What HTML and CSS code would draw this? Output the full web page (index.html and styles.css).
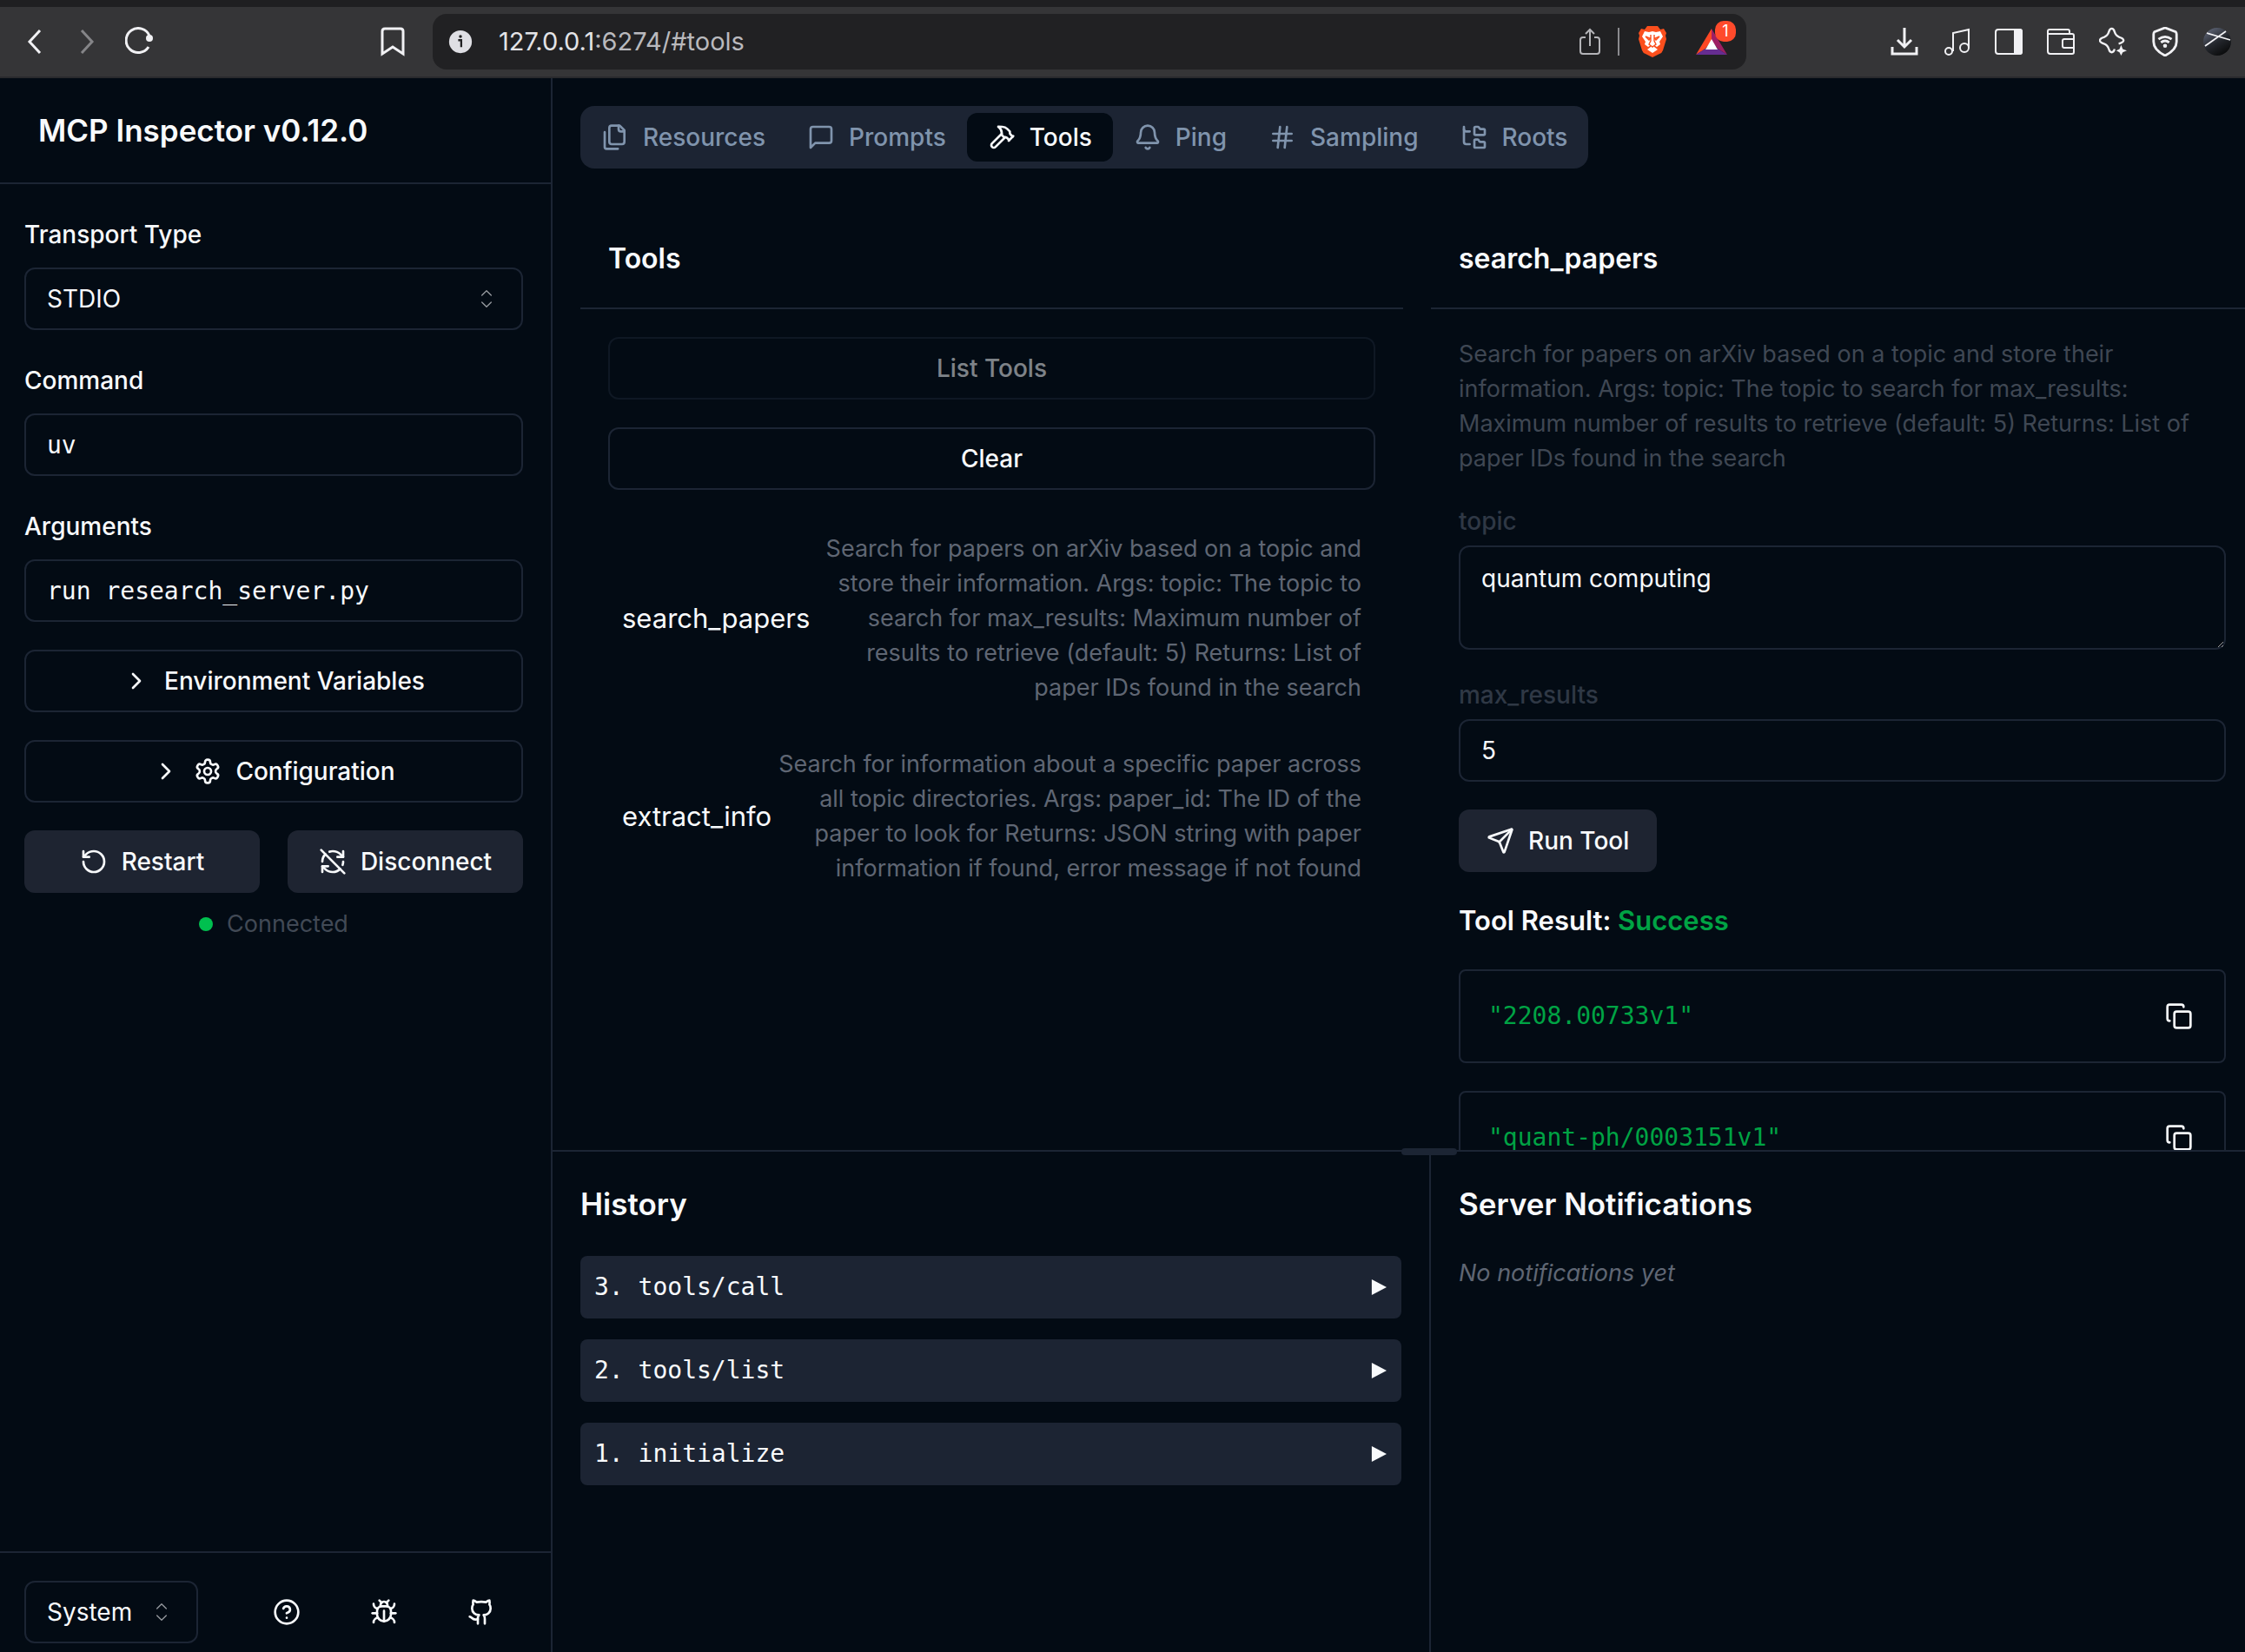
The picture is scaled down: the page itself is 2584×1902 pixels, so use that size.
FILE: index.html
```
<!DOCTYPE html>
<html lang="en">
<head>
<meta charset="UTF-8" />
<meta name="viewport" content="width=device-width, initial-scale=1" />
<title>MCP Inspector</title>
<link rel="stylesheet" href="styles.css">
</head>
<body>

<!-- Browser toolbar -->
<div class="browser-bar">
  <div class="browser-left">
    <div class="browser-nav">
      <button type="button" class="bar-btn" aria-label="Back"><svg viewBox="0 0 32 32"><path d="M22 3 10 16l12 13" stroke-width="3"/></svg></button>
      <button type="button" class="bar-btn dim" aria-label="Forward"><svg viewBox="0 0 32 32"><path d="m10 3 12 13-12 13" stroke-width="3"/></svg></button>
      <button type="button" class="bar-btn" aria-label="Reload"><svg viewBox="0 0 32 32"><path d="M27 22A14 14 0 1 1 28 9" stroke-width="3"/><circle cx="28" cy="12" r="4" fill="currentColor" stroke="none"/></svg></button>
    </div>
    <button type="button" class="bar-btn" aria-label="Bookmark"><svg viewBox="0 0 32 32"><path d="M7 1h18q3 0 3 3v26l-12-8-12 8V4q0-3 3-3Z" stroke-width="3"/></svg></button>
  </div>
  <div class="url-bar">
    <svg class="info" viewBox="0 0 32 32"><circle cx="16" cy="16" r="15" fill="#dfdfe4"/><circle cx="16" cy="9" r="2" fill="#212123"/><path d="M13 14h4v9" fill="none" stroke="#212123" stroke-width="2.6"/></svg>
    <p class="url">127.0.0.1<span>:6274/#tools</span></p>
    <button type="button" class="url-btn share" aria-label="Share"><svg viewBox="0 0 28 32"><path d="M9 11H6q-3 0-3 3v13q0 3 3 3h16q3 0 3-3V14q0-3-3-3h-3M14 21V2M9 7l5-5 5 5" stroke-width="2"/></svg></button>
    <span class="divider"></span>
    <button type="button" class="url-btn lion" aria-label="Brave Shields"><svg viewBox="0 0 32 36"><path d="M10 0h12l3 4 4-1 3 5-1 3 1 4-4 13q-1 3-4 4l-8 4-8-4q-3-1-4-4L0 15l1-4-1-3 3-5 4 1Z" fill="#fb4f1d" stroke="none"/><path d="m16 6 4 1 5-1 3 6-4 6 1 3-4 3-3-2v2l4 3-6 4-6-4 4-3v-2l-3 2-4-3 1-3-4-6 3-6 5 1Z" fill="#fff" stroke="none"/><path d="m8 12 5 2-1 2ZM24 12l-5 2 1 2ZM14 10v7l-2 4 4 3 4-3-2-4v-7" fill="none" stroke="#fb4f1d" stroke-width="1.4"/></svg></button>
    <button type="button" class="url-btn bat" aria-label="Brave Rewards"><svg viewBox="0 0 36 32"><path d="M18 1v14L11 24 0 31Z" fill="#ff4724" stroke="none"/><path d="M18 1v14l7 9 11 7Z" fill="#9e1f63" stroke="none"/><path d="m0 31 11-7h14l11 7Z" fill="#662d91" stroke="none"/><path d="M18 13l7 12H11Z" fill="#fff" stroke="none"/></svg><span class="badge">1</span></button>
  </div>
  <div class="browser-right">
    <button type="button" class="bar-btn" aria-label="Downloads"><svg viewBox="0 0 32 32"><path d="M16 0v20M8 14l8 8 8-8M2 22v8h28v-8" stroke-width="3"/></svg></button>
    <button type="button" class="bar-btn" aria-label="Media"><svg viewBox="0 0 32 32"><path d="M12 27V6l18-4v21"/><circle cx="7" cy="27" r="4"/><circle cx="25" cy="23" r="5"/></svg></button>
    <button type="button" class="bar-btn" aria-label="Sidebar"><svg viewBox="0 0 32 32"><rect x="1" y="2" width="30" height="28" rx="3"/><path d="M23 2h6q2 0 2 2v24q0 2-2 2h-6Z" fill="currentColor"/></svg></button>
    <button type="button" class="bar-btn" aria-label="Wallet"><svg viewBox="0 0 32 32"><path d="M26 7V4q0-2-2-2H3Q1 2 1 4v23q0 3 3 3h25q2 0 2-2V9q0-2-2-2H2M31 13H20q-2 0-2 2v6q0 2 2 2h11"/></svg></button>
    <button type="button" class="bar-btn" aria-label="Leo AI"><svg viewBox="0 0 34 34"><path d="M24 19.500Q30 18 30 15.500T25 11.500Q20.500 10 19 5 18 1 15.500 1T12 5Q10.500 10 6 11.500 1 13 1 15.500t5 4Q10.500 21 12 26q1 4 3.500 4t3.500-4" stroke-width="2.500"/><path d="m27 21 2 5 5 2-5 2-2 4-2-4-4-2 4-2Z" fill="currentColor" stroke="none"/></svg></button>
    <button type="button" class="bar-btn" aria-label="VPN"><svg viewBox="0 0 32 36"><path d="M16 1 29 6q1 1 1 3v9q0 10-14 17Q2 28 2 18V9q0-2 1-3Z" stroke-width="3"/><path d="M8 15q8-6 16 0M11 19q5-4 10 0" stroke-width="3"/><circle cx="16" cy="23" r="2.4" fill="currentColor" stroke="none"/></svg></button>
    <button type="button" class="bar-btn" aria-label="Profile"><svg viewBox="0 0 32 32"><defs><linearGradient id="ball" x1="0" y1="0" x2="0.6" y2="1"><stop offset="0" stop-color="#6a7185"/><stop offset=".6" stop-color="#24272d"/><stop offset="1" stop-color="#0c0d0e"/></linearGradient></defs><circle cx="16" cy="16" r="16" fill="url(#ball)" stroke="none"/><path d="M2 21 26 4M4 6l27 8" stroke-width="1.8"/></svg></button>
  </div>
</div>

<div class="app">
  <!-- Connection settings -->
  <aside class="sidebar">
    <header class="sidebar-header"><h1>MCP Inspector v0.12.0</h1></header>

    <form class="settings">
      <div class="field">
        <label for="transport">Transport Type</label>
        <div class="select">
          <select id="transport"><option>STDIO</option><option>SSE</option></select>
          <svg class="icon caret" viewBox="0 0 24 24"><path d="m8 9 4-4 4 4M8 15l4 4 4-4"/></svg>
        </div>
      </div>
      <div class="field">
        <label for="command">Command</label>
        <input type="text" id="command" class="mono" value="uv">
      </div>
      <div class="field">
        <label for="args">Arguments</label>
        <input type="text" id="args" class="mono" value="run research_server.py">
      </div>
      <button type="button" class="btn outline">
        <svg class="icon" viewBox="0 0 24 24"><path d="m9 18 6-6-6-6"/></svg>
        Environment Variables
      </button>
      <button type="button" class="btn outline">
        <svg class="icon" viewBox="0 0 24 24"><path d="m9 18 6-6-6-6"/></svg>
        <svg class="icon" viewBox="0 0 24 24"><path d="M12.22 2h-.44a2 2 0 0 0-2 2v.18a2 2 0 0 1-1 1.73l-.43.25a2 2 0 0 1-2 0l-.15-.08a2 2 0 0 0-2.73.73l-.22.38a2 2 0 0 0 .73 2.73l.15.1a2 2 0 0 1 1 1.72v.51a2 2 0 0 1-1 1.74l-.15.09a2 2 0 0 0-.73 2.73l.22.38a2 2 0 0 0 2.73.73l.15-.08a2 2 0 0 1 2 0l.43.25a2 2 0 0 1 1 1.73V20a2 2 0 0 0 2 2h.44a2 2 0 0 0 2-2v-.18a2 2 0 0 1 1-1.73l.43-.25a2 2 0 0 1 2 0l.15.08a2 2 0 0 0 2.73-.73l.22-.39a2 2 0 0 0-.73-2.73l-.15-.08a2 2 0 0 1-1-1.74v-.5a2 2 0 0 1 1-1.74l.15-.09a2 2 0 0 0 .73-2.73l-.22-.38a2 2 0 0 0-2.73-.73l-.15.08a2 2 0 0 1-2 0l-.43-.25a2 2 0 0 1-1-1.73V4a2 2 0 0 0-2-2z"/><circle cx="12" cy="12" r="3"/></svg>
        Configuration
      </button>
      <div>
        <div class="button-group">
          <button type="button" class="btn solid">
            <svg class="icon" viewBox="0 0 24 24"><path d="M3 12a9 9 0 1 0 9-9 9.75 9.75 0 0 0-6.74 2.74L3 8"/><path d="M3 3v5h5"/></svg>
            Restart
          </button>
          <button type="button" class="btn solid">
            <svg class="icon" viewBox="0 0 24 24"><path d="M21 8 18.74 5.74A9.75 9.75 0 0 0 12 3c-1 0-1.97.16-2.87.47"/><path d="M8 16H3v5"/><path d="M3 12c0-2.49 1-4.74 2.64-6.36"/><path d="m3 16 2.26 2.26A9.75 9.75 0 0 0 12 21c2.49 0 4.74-1 6.36-2.64"/><path d="M21 12c0 1-.16 1.97-.47 2.87"/><path d="M21 3v5h-5"/><path d="M22 22 2 2"/></svg>
            Disconnect
          </button>
        </div>
        <p class="status"><span class="dot"></span>Connected</p>
      </div>
    </form>

    <footer class="sidebar-footer">
      <div class="select theme">
        <select aria-label="Theme"><option>System</option><option>Light</option><option>Dark</option></select>
        <svg class="icon caret" viewBox="0 0 24 24"><path d="m8 9 4-4 4 4M8 15l4 4 4-4"/></svg>
      </div>
      <div class="links">
        <a href="#docs" aria-label="Documentation"><svg class="icon" viewBox="0 0 24 24"><circle cx="12" cy="12" r="10"/><path d="M9.09 9a3 3 0 0 1 5.83 1c0 2-3 3-3 3"/><path d="M12 17h.01"/></svg></a>
        <a href="#debug" aria-label="Debugging guide"><svg class="icon" viewBox="0 0 24 24"><path d="m8 2 1.88 1.88"/><path d="M14.12 3.88 16 2"/><path d="M9 7.13v-1a3.003 3.003 0 1 1 6 0v1"/><path d="M12 20c-3.3 0-6-2.7-6-6v-3a4 4 0 0 1 4-4h4a4 4 0 0 1 4 4v3c0 3.3-2.7 6-6 6"/><path d="M12 20v-9"/><path d="M6.53 9C4.6 8.8 3 7.1 3 5"/><path d="M6 13H2"/><path d="M3 21c0-2.1 1.7-3.9 3.8-4"/><path d="M20.97 5c0 2.1-1.6 3.8-3.5 4"/><path d="M22 13h-4"/><path d="M17.2 17c2.1.1 3.8 1.9 3.8 4"/></svg></a>
        <a href="#github" aria-label="GitHub"><svg class="icon" viewBox="0 0 24 24"><path d="M15 22v-4a4.8 4.8 0 0 0-1-3.5c3 0 6-2 6-5.5.08-1.25-.27-2.48-1-3.5.28-1.15.28-2.35 0-3.5 0 0-1 0-3 1.5-2.64-.5-5.36-.5-8 0C6 2 5 2 5 2c-.3 1.15-.3 2.35 0 3.5A5.403 5.403 0 0 0 4 9c0 3.5 3 5.5 6 5.5-.39.49-.68 1.05-.85 1.65-.17.6-.22 1.23-.15 1.85v4"/><path d="M9 18c-4.51 2-5-2-7-2"/></svg></a>
      </div>
    </footer>
  </aside>

  <main class="main">
    <div class="workspace">
      <nav class="tabs">
        <button type="button"><svg class="icon" viewBox="0 0 24 24"><path d="M20 7h-3a2 2 0 0 1-2-2V2"/><path d="M9 18a2 2 0 0 1-2-2V4a2 2 0 0 1 2-2h7l4 4v10a2 2 0 0 1-2 2Z"/><path d="M3 7.6v12.8A1.6 1.6 0 0 0 4.6 22h9.8"/></svg>Resources</button>
        <button type="button"><svg class="icon" viewBox="0 0 24 24"><path d="M21 15a2 2 0 0 1-2 2H7l-4 4V5a2 2 0 0 1 2-2h14a2 2 0 0 1 2 2z"/></svg>Prompts</button>
        <button type="button" class="active"><svg class="icon" viewBox="0 0 24 24"><path d="m15 12-8.373 8.373a1 1 0 1 1-3-3L12 9"/><path d="m18 15 4-4"/><path d="m21.5 11.5-1.914-1.914A2 2 0 0 1 19 8.172V7l-2.26-2.26a6 6 0 0 0-4.202-1.756L9 2.96l.92.82A6.18 6.18 0 0 1 12 8.4V10l2 2h1.172a2 2 0 0 1 1.414.586L18.5 14.5"/></svg>Tools</button>
        <button type="button"><svg class="icon" viewBox="0 0 24 24"><path d="M10.268 21a2 2 0 0 0 3.464 0"/><path d="M3.262 15.326A1 1 0 0 0 4 17h16a1 1 0 0 0 .74-1.673C19.41 13.956 18 12.499 18 8A6 6 0 0 0 6 8c0 4.499-1.411 5.956-2.738 7.326"/></svg>Ping</button>
        <button type="button"><svg class="icon" viewBox="0 0 24 24"><path d="M4 9h16M4 15h16M10 3 8 21M16 3l-2 18"/></svg>Sampling</button>
        <button type="button"><svg class="icon" viewBox="0 0 24 24"><path d="M20 10a1 1 0 0 0 1-1V6a1 1 0 0 0-1-1h-2.5a1 1 0 0 1-.8-.4l-.9-1.2A1 1 0 0 0 15 3h-2a1 1 0 0 0-1 1v5a1 1 0 0 0 1 1Z"/><path d="M20 21a1 1 0 0 0 1-1v-3a1 1 0 0 0-1-1h-2.9a1 1 0 0 1-.88-.55l-.42-.85a1 1 0 0 0-.92-.6H13a1 1 0 0 0-1 1v5a1 1 0 0 0 1 1Z"/><path d="M3 5a2 2 0 0 0 2 2h3"/><path d="M3 3v13a2 2 0 0 0 2 2h3"/></svg>Roots</button>
      </nav>

      <div class="panels">
        <section class="panel" aria-label="Tools">
          <h3>Tools</h3>
          <div class="panel-body">
            <button type="button" class="btn outline" disabled>List Tools</button>
            <button type="button" class="btn outline">Clear</button>
            <ul class="tool-list">
              <li>
                <span class="tool-name">search_papers</span>
                <span class="tool-desc">Search for papers on arXiv based on a topic and store their information. Args: topic: The topic to search for max_results: Maximum number of results to retrieve (default: 5) Returns: List of paper IDs found in the search</span>
              </li>
              <li>
                <span class="tool-name">extract_info</span>
                <span class="tool-desc">Search for information about a specific paper across all topic directories. Args: paper_id: The ID of the paper to look for Returns: JSON string with paper information if found, error message if not found</span>
              </li>
            </ul>
          </div>
        </section>

        <section class="panel" aria-label="search_papers">
          <h3>search_papers</h3>
          <div class="panel-body">
            <p class="about">Search for papers on arXiv based on a topic and store their information. Args: topic: The topic to search for max_results: Maximum number of results to retrieve (default: 5) Returns: List of paper IDs found in the search</p>
            <div class="param">
              <label for="topic">topic</label>
              <textarea id="topic">quantum computing</textarea>
            </div>
            <div class="param">
              <label for="max_results">max_results</label>
              <input type="text" inputmode="numeric" id="max_results" value="5">
            </div>
            <button type="button" class="btn solid run">
              <svg class="icon" viewBox="0 0 24 24"><path d="M14.536 21.686a.5.5 0 0 0 .937-.024l6.5-19a.496.496 0 0 0-.635-.635l-19 6.5a.5.5 0 0 0-.024.937l7.93 3.18a2 2 0 0 1 1.112 1.11z"/><path d="m21.854 2.147-10.94 10.939"/></svg>
              Run Tool
            </button>
            <h4>Tool Result: <span>Success</span></h4>
            <div class="result">
              <code>"2208.00733v1"</code>
              <button type="button" aria-label="Copy"><svg class="icon" viewBox="0 0 24 24"><rect x="8" y="8" width="14" height="14" rx="2"/><path d="M4 16c-1.1 0-2-.9-2-2V4c0-1.1.9-2 2-2h10c1.1 0 2 .9 2 2"/></svg></button>
            </div>
            <div class="result">
              <code>"quant-ph/0003151v1"</code>
              <button type="button" aria-label="Copy"><svg class="icon" viewBox="0 0 24 24"><rect x="8" y="8" width="14" height="14" rx="2"/><path d="M4 16c-1.1 0-2-.9-2-2V4c0-1.1.9-2 2-2h10c1.1 0 2 .9 2 2"/></svg></button>
            </div>
          </div>
        </section>
      </div>
    </div>

    <!-- Resizable bottom pane -->
    <div class="bottom">
      <section class="history">
        <div class="drag-handle"></div>
        <h2>History</h2>
        <ul>
          <li><button type="button">3. tools/call<svg class="arrow" viewBox="0 0 20 20"><path d="M1 0v20l19-10Z"/></svg></button></li>
          <li><button type="button">2. tools/list<svg class="arrow" viewBox="0 0 20 20"><path d="M1 0v20l19-10Z"/></svg></button></li>
          <li><button type="button">1. initialize<svg class="arrow" viewBox="0 0 20 20"><path d="M1 0v20l19-10Z"/></svg></button></li>
        </ul>
      </section>
      <section class="notifications">
        <h2>Server Notifications</h2>
        <p>No notifications yet</p>
      </section>
    </div>
  </main>
</div>

</body>
</html>
```
FILE: styles.css
```
:root {
  --bg: #030b14;
  --muted: #1c2433;
  --solid: #1e2431;
  --border: #1c2534;
  --text: #f8fafc;
  --slate: #8094ad;
  --green: #00a344;
}
* {
  box-sizing: border-box;
  margin: 0;
  padding: 0;
}
body {
  height: 100vh;
  display: flex;
  flex-direction: column;
  overflow: hidden;
  background: var(--bg);
  color: var(--text);
  font-family: Inter, "Liberation Sans", sans-serif;
  font-size: 28px;
  line-height: 40px;
}
button, input, select, textarea {
  font: inherit;
  color: inherit;
  background: none;
  border: none;
  outline: none;
}
ul {
  list-style: none;
}
svg {
  display: block;
  flex: none;
  fill: none;
  stroke: currentColor;
  stroke-width: 2;
}
.icon {
  width: 32px;
  height: 32px;
  stroke-linecap: round;
  stroke-linejoin: round;
}
.mono, code, .history button {
  font-family: "DejaVu Sans Mono", monospace;
}

/* Browser toolbar */
.browser-bar {
  display: flex;
  align-items: center;
  height: 90px;
  padding: 0 2px 0 10px;
  background: #353537;
  border-top: 8px solid #1f1f21;
  border-bottom: 2px solid #2a2a2e;
  color: #f1f1f4;
}
.browser-left {
  display: flex;
  justify-content: space-between;
  width: 488px;
  padding-right: 16px;
}
.browser-nav, .browser-right {
  display: flex;
}
.browser-right {
  margin-left: 152px;
}
.bar-btn {
  display: flex;
  justify-content: center;
  align-items: center;
  width: 60px;
  height: 64px;
}
.bar-btn svg {
  width: 32px;
  height: 34px;
}
.bar-btn.dim {
  color: #858588;
}
.url-bar {
  flex: 1;
  display: flex;
  align-items: center;
  height: 64px;
  padding: 0 22px 0 18px;
  border-radius: 16px;
  background: #212123;
}
.info {
  width: 28px;
  height: 28px;
  margin-right: 30px;
  stroke: none;
}
.url {
  flex: 1;
  color: #e3e3e6;
  font-size: 29px;
}
.url span {
  color: #b9b9bd;
}
.url-btn {
  position: relative;
}
.url-btn svg {
  width: 32px;
  height: 32px;
}
.share {
  color: #b4b4b8;
}
.url-btn.share svg {
  width: 28px;
}
.divider {
  width: 2px;
  height: 32px;
  margin: 0 22px 0 18px;
  background: #8a8a8e;
}
.url-btn.lion svg {
  height: 36px;
}
.bat {
  margin-left: 34px;
}
.url-btn.bat svg {
  width: 36px;
}
.badge {
  position: absolute;
  top: -8px;
  right: -10px;
  width: 24px;
  height: 24px;
  border-radius: 10px;
  background: #ff4a2b;
  color: #fff;
  font-size: 18px;
  line-height: 24px;
  text-align: center;
}

/* Layout */
.app {
  flex: 1;
  display: flex;
  min-height: 0;
}
.sidebar {
  display: flex;
  flex-direction: column;
  width: 636px;
  border-right: 2px solid var(--border);
}
.main {
  flex: 1;
  display: flex;
  flex-direction: column;
  min-width: 0;
}

/* Sidebar */
.sidebar-header {
  padding: 32px 44px;
  border-bottom: 2px solid var(--border);
}
h1, h2 {
  font-size: 35px;
  line-height: 56px;
  font-weight: 600;
}
.settings {
  flex: 1;
  display: flex;
  flex-direction: column;
  gap: 32px;
  padding: 32px 32px 32px 28px;
}
.field label {
  display: block;
  padding: 6px 0 18px;
  font-weight: 500;
}
.select {
  position: relative;
}
.caret {
  position: absolute;
  top: 20px;
  right: 26px;
  opacity: 0.6;
  stroke-width: 1;
  pointer-events: none;
}
input, select {
  display: block;
  width: 100%;
  height: 72px;
  padding: 0 24px;
  border: 2px solid var(--border);
  border-radius: 12px;
}
select {
  appearance: none;
}
.btn {
  display: flex;
  justify-content: center;
  align-items: center;
  gap: 16px;
  width: 100%;
  height: 72px;
  padding: 0 32px;
  border-radius: 12px;
  font-weight: 500;
}
.btn.outline {
  border: 2px solid var(--border);
}
.btn.solid {
  background: var(--solid);
}
.btn:disabled {
  opacity: 0.5;
}
.button-group {
  display: grid;
  grid-template-columns: 1fr 1fr;
  gap: 32px;
}
.status {
  display: flex;
  justify-content: center;
  align-items: center;
  gap: 16px;
  margin-top: 16px;
  color: #414955;
  font-size: 27px;
}
.dot {
  width: 16px;
  height: 16px;
  border-radius: 50%;
  background: #00c04f;
}
.sidebar-footer {
  display: flex;
  justify-content: space-between;
  padding: 32px 32px 10px 28px;
  border-top: 2px solid var(--border);
}
.theme {
  width: 200px;
}
.links {
  display: flex;
  gap: 16px;
}
.links a {
  display: flex;
  justify-content: center;
  align-items: center;
  width: 96px;
  color: inherit;
}

/* Workspace */
.workspace {
  flex: 1;
  min-height: 0;
  overflow: hidden;
  padding: 32px 0 0 32px;
}
.tabs {
  display: inline-flex;
  padding: 8px 0;
  border-radius: 16px;
  background: var(--muted);
  vertical-align: top;
}
.tabs button {
  display: flex;
  align-items: center;
  gap: 16px;
  height: 56px;
  padding: 0 24px;
  border-radius: 12px;
  color: var(--slate);
  font-weight: 500;
}
.tabs button.active {
  background: var(--bg);
  color: var(--text);
}
.panels {
  display: grid;
  grid-template-columns: 1fr 1fr;
  gap: 32px;
  margin: 48px -10px 0 0;
}
h3 {
  padding: 32px;
  border-bottom: 2px solid var(--border);
  font-size: 32px;
  line-height: 48px;
  font-weight: 600;
}
.panel-body {
  display: flex;
  flex-direction: column;
  gap: 32px;
  padding: 32px;
}
.tool-list {
  display: flex;
  flex-direction: column;
  gap: 16px;
}
.tool-list li {
  display: flex;
  align-items: center;
  justify-content: space-between;
  padding: 16px;
}
.tool-name {
  font-size: 31px;
}
.tool-desc {
  color: #5f6673;
  font-size: 27px;
  text-align: right;
}
.about {
  color: #3f4753;
  font-size: 27px;
}
.param label {
  display: block;
  padding-bottom: 8px;
  color: #2f3845;
  font-weight: 500;
}
textarea {
  display: block;
  width: 100%;
  height: 120px;
  padding: 16px 24px;
  border: 2px solid var(--border);
  border-radius: 12px;
  resize: vertical;
}
.btn.run {
  width: auto;
  align-self: flex-start;
}
h4 {
  font-size: 31px;
  line-height: 48px;
  font-weight: 600;
}
h4 span {
  color: var(--green);
}
.result {
  display: flex;
  justify-content: space-between;
  align-items: center;
  padding: 32px 36px 32px 32px;
  border: 2px solid var(--border);
  border-radius: 8px;
}
.result code {
  color: var(--green);
}

/* Bottom pane */
.bottom {
  display: grid;
  grid-template-columns: 1011fr 937fr;
  height: 578px;
  border-top: 2px solid var(--border);
}
.history {
  position: relative;
  padding: 32px;
  border-right: 2px solid var(--border);
}
.drag-handle {
  position: absolute;
  top: -4px;
  right: -32px;
  width: 64px;
  height: 8px;
  border-radius: 4px;
  background: var(--border);
}
.notifications {
  padding: 32px;
}
.bottom h2 {
  margin-bottom: 32px;
}
.history ul {
  display: flex;
  flex-direction: column;
  gap: 24px;
}
.history button {
  display: flex;
  justify-content: space-between;
  align-items: center;
  width: 100%;
  padding: 16px;
  border-radius: 8px;
  background: var(--muted);
}
.arrow {
  width: 20px;
  height: 18px;
  fill: currentColor;
  stroke: none;
}
.notifications p {
  color: #5f6673;
  font-size: 27px;
  font-style: italic;
}
```
